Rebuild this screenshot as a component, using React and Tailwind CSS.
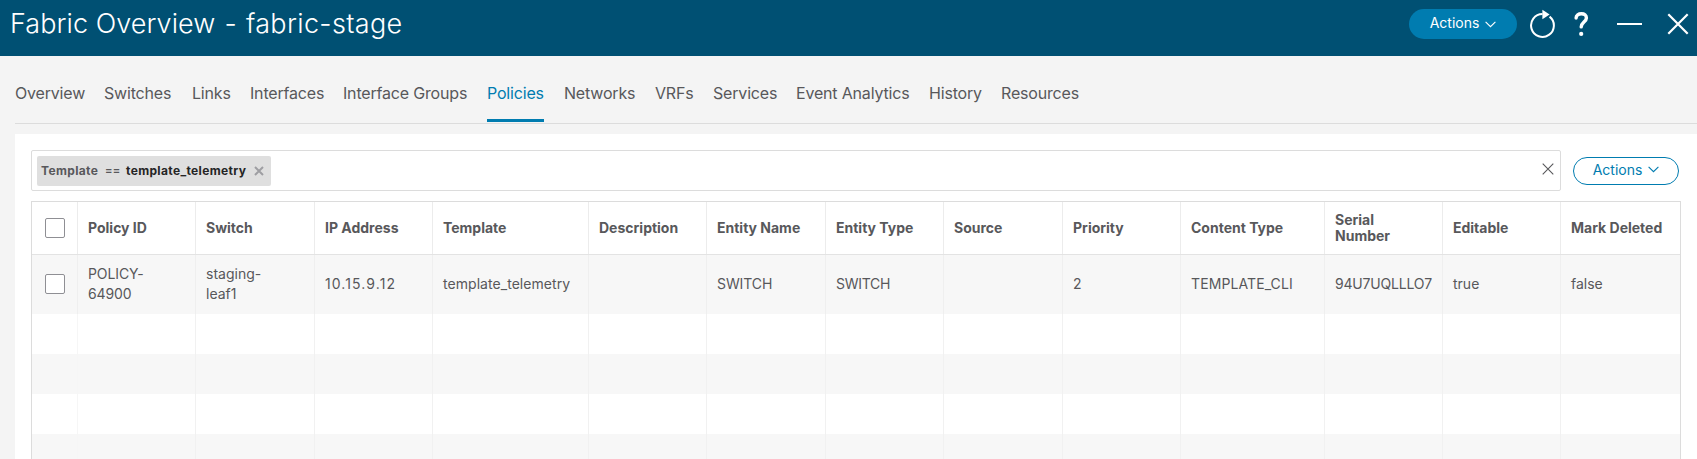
import React from 'react';

const tabs = [
  ['Overview', 'w-[69px]'],
  ['Switches', 'w-[68px]'],
  ['Links', 'w-[38px]'],
  ['Interfaces', 'w-[73px]'],
  ['Interface Groups', 'w-[124px]'],
  ['Policies', 'w-[57px]'],
  ['Networks', 'w-[71px]'],
  ['VRFs', 'w-[38px]'],
  ['Services', 'w-[63px]'],
  ['Event Analytics', 'w-[113px]'],
  ['History', 'w-[52px]'],
  ['Resources', 'w-[78px]'],
];

const columns = [
  ['Policy ID', 'w-[118px]', 'POLICY-64900'],
  ['Switch', 'w-[119px]', 'staging-leaf1'],
  ['IP Address', 'w-[118px]', '10.15.9.12'],
  ['Template', 'w-[156px]', 'template_telemetry'],
  ['Description', 'w-[118px]', ''],
  ['Entity Name', 'w-[119px]', 'SWITCH'],
  ['Entity Type', 'w-[118px]', 'SWITCH'],
  ['Source', 'w-[119px]', ''],
  ['Priority', 'w-[118px]', '2'],
  ['Content Type', 'w-[144px]', 'TEMPLATE_CLI'],
  ['Serial Number', 'w-[118px]', '94U7UQLLLO7'],
  ['Editable', 'w-[118px]', 'true'],
  ['Mark Deleted', 'w-[119px]', 'false'],
];

const valueStyles = {
  'Policy ID': 'w-[62px] tracking-[-0.1px]',
  Switch: 'w-[62px]',
  'IP Address': 'whitespace-nowrap tracking-[1.1px]',
  Template: 'whitespace-nowrap tracking-[0.05px]',
  'Entity Name': 'whitespace-nowrap tracking-[-0.1px]',
  'Entity Type': 'whitespace-nowrap tracking-[-0.3px]',
  'Content Type': 'whitespace-nowrap tracking-[0.1px]',
  'Serial Number': 'whitespace-nowrap tracking-[-0.2px]',
};

function Chevron() {
  return (
    <svg width="11" height="7" viewBox="0 0 11 7" fill="none" stroke="currentColor" strokeWidth="1.1">
      <path d="M0.6 0.8 5.5 5.7 10.4 0.8" />
    </svg>
  );
}

function Checkbox() {
  return <span className="block size-5 rounded-[2px] border border-[#8f8f94] bg-white" />;
}

function Header() {
  return (
    <header className="flex h-14 shrink-0 items-start bg-[#005073] text-white">
      <h1 className="grow pt-[6px] pl-[10px] text-[27px] leading-9 font-light tracking-[0.05px] whitespace-pre">
        Fabric Overview <span className="mx-[1.5px]">-</span> <span className="tracking-[0.35px]">fabric-stage</span>
      </h1>
      <button className="mt-[9px] flex h-[30px] w-[108px] items-center justify-center gap-1.5 rounded-full bg-[#007cb0] pb-[3px] text-[14px]">
        Actions
        <span className="pt-[3px]"><Chevron /></span>
      </button>
      <svg className="mt-2 ml-3 shrink-0" width="28" height="32" viewBox="0 0 28 32" fill="none">
        <path d="M20.6 8.6A11.4 11.4 0 1 1 13.5 6.1" stroke="white" strokeWidth="2" />
        <path d="M13.4 1.8 20.6 6.6 13.4 11.2Z" fill="white" />
      </svg>
      <svg className="mt-3 ml-[17px] shrink-0" width="16" height="24" viewBox="0 0 16 24" fill="none">
        <path d="M2.1 6C2.1 3.2 4.5 1.8 7.4 1.8c3 0 5 1.4 5 4.1 0 3.9-5.2 4.4-5.2 9" stroke="white" strokeWidth="3.4" strokeLinecap="round" />
        <circle cx="7.2" cy="21.9" r="2.1" fill="white" />
      </svg>
      <svg className="mt-[23px] mr-[25px] ml-[27px] shrink-0" width="25" height="2" viewBox="0 0 25 2">
        <path d="M0 1H25" stroke="white" strokeWidth="2" />
      </svg>
      <svg className="mt-[13px] mr-[8px] shrink-0" width="22" height="22" viewBox="0 0 22 22">
        <path d="M1.3 1.3 20.7 20.7M20.7 1.3 1.3 20.7" stroke="white" strokeWidth="2.2" />
      </svg>
    </header>
  );
}

function Row({ children, className }) {
  return <div className={`flex shrink-0 ${className}`}>{children}</div>;
}

export default function App() {
  return (
    <div className="flex h-[459px] w-[1697px] flex-col overflow-hidden bg-[#f4f4f4] font-['Inter',sans-serif] text-[#58585b]">
      <Header />
      <nav className="ml-[15px] flex h-[68px] shrink-0 gap-5 border-b border-[#dcdcdc] text-[16px] tracking-[-0.18px]">
        {tabs.map(([label, width]) => (
          <a
            key={label}
            className={`mb-px flex justify-start border-b-[3px] pt-[25px] leading-6 whitespace-nowrap ${width} ${
              label === 'Policies' ? 'border-[#007cb0] text-[#007cb0]' : 'border-transparent'
            }`}
          >
            {label}
          </a>
        ))}
      </nav>
      <main className="mt-2.5 ml-[15px] flex grow flex-col bg-white pt-4 pl-4">
        <div className="flex h-[41px] shrink-0 items-center">
          <div className="flex h-[41px] w-[1530px] items-center rounded-[2px] border border-[#dcdcdc] pr-[6px] pl-[5px]">
            <div className="flex h-[30px] w-[234px] items-center rounded-[2px] bg-[#dfdfdf] pl-1 text-[12px] font-bold tracking-[0.35px]">
              <span className="w-[64px]">Template</span>
              <span className="w-[21px] text-[11px]">==</span>
              <span className="w-[128px] text-[#252525]">template_telemetry</span>
              <svg width="10" height="10" viewBox="0 0 10 10">
                <path d="M1 1 9 9M9 1 1 9" stroke="#9e9ea2" strokeWidth="2" />
              </svg>
            </div>
            <svg className="mb-1 ml-auto" width="12" height="12" viewBox="0 0 12 12">
              <path d="M0.7 0.7 11.3 11.3M11.3 0.7 0.7 11.3" stroke="#58585b" strokeWidth="1.1" />
            </svg>
          </div>
          <button className="ml-3 flex h-7 w-[106px] items-center justify-center gap-1.5 rounded-full border border-[#007cb0] pb-[2px] text-[14px] text-[#007cb0]">
            Actions
            <Chevron />
          </button>
        </div>
        <div className="mt-2.5 flex h-[300px] w-[1650px] shrink-0 flex-col border border-[#dcdcdc] text-[14px]">
          <Row className="h-[53px] border-b border-[#e3e3e3] font-bold">
            <div className="flex w-[46px] items-center border-r border-[#ececec] pl-[13px]"><Checkbox /></div>
            {columns.map(([label, width]) => (
              <div key={label} className={`flex shrink-0 items-center border-r border-[#ececec] pl-[10px] leading-4 last:border-r-0 ${width}`}>
                <span className={label === 'Serial Number' ? 'w-[60px]' : 'whitespace-nowrap'}>{label}</span>
              </div>
            ))}
          </Row>
          <Row className="h-[59px] bg-[#f7f7f7]">
            <div className="flex w-[46px] items-center border-r border-[#efefef] pb-[2px] pl-[13px]"><Checkbox /></div>
            {columns.map(([label, width, value]) => (
              <div key={label} className={`flex shrink-0 items-center border-r border-[#efefef] pb-[2px] pl-[10px] leading-5 last:border-r-0 ${width}`}>
                <span className={valueStyles[label] || 'whitespace-nowrap'}>{value}</span>
              </div>
            ))}
          </Row>
          {[0, 1, 2, 3].map((i) => (
            <Row key={i} className={`h-10 ${i % 2 ? 'bg-[#f7f7f7]' : 'bg-white'}`}>
              <div className="w-[46px] border-r border-[#f6f6f6]" />
              {columns.map(([label, width]) => (
                <div key={label} className={`shrink-0 border-r border-[#f1f1f1] last:border-r-0 ${width}`} />
              ))}
            </Row>
          ))}
        </div>
      </main>
    </div>
  );
}
